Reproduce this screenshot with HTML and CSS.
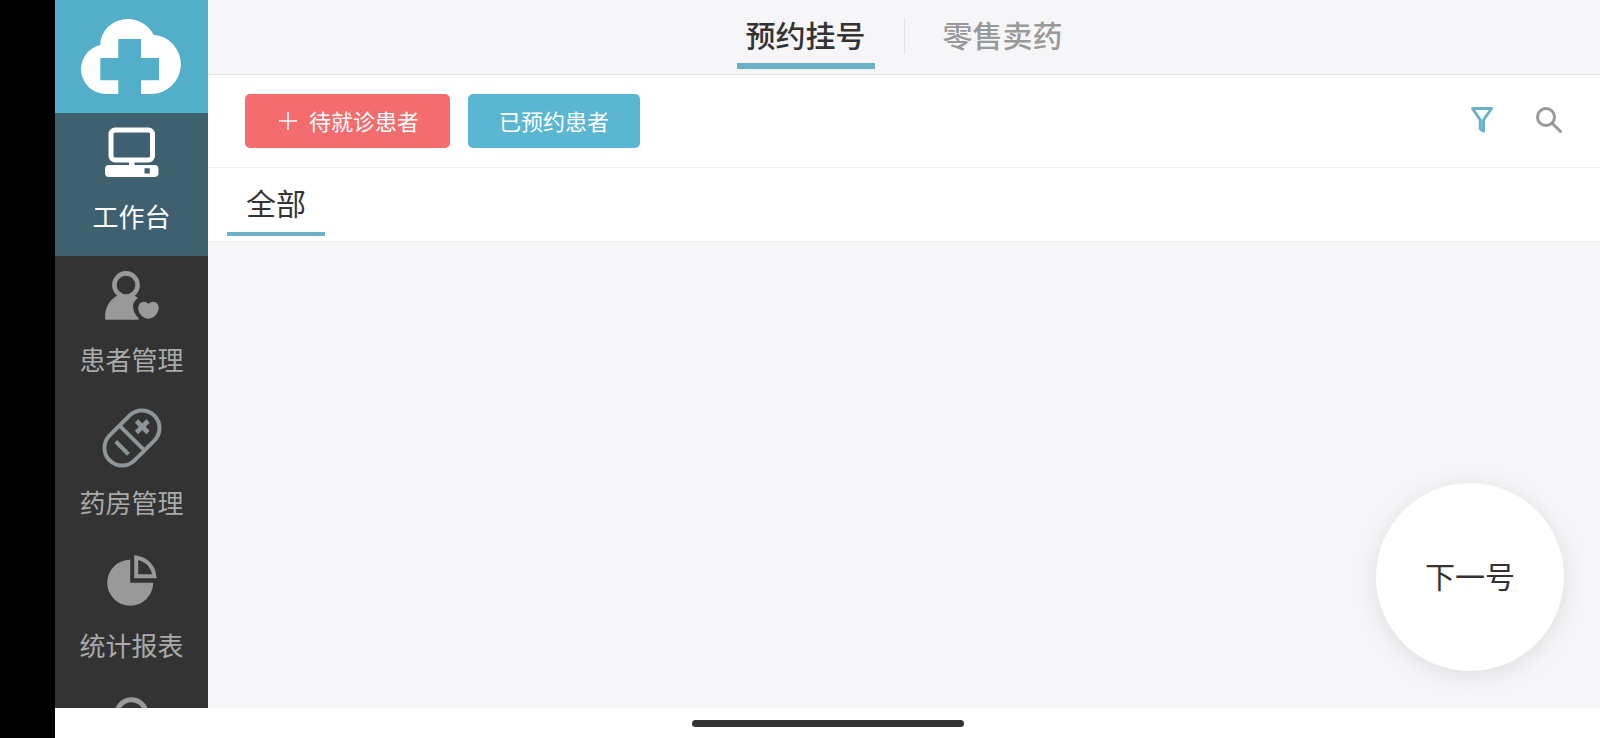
FILE: index.html
```html
<!DOCTYPE html>
<html lang="zh-CN">
<head>
    <meta charset="UTF-8">
    <meta name="viewport" content="width=device-width, initial-scale=1.0">
    <title>工作台</title>
    <link rel="stylesheet" href="styles.css">
</head>
<body>
    <div class="screen">
        <div class="app">
            <aside class="sidebar">
                <div class="logo">
                    <svg width="100" height="75" viewBox="0 0 100 75">
                        <path fill="#fff" d="M25 75A25 25 0 0 1 0 50A25 25 0 0 1 19.300 26A27.400 26 0 0 1 46.700 0A29.200 29.200 0 0 1 72.600 15.700A29.700 29.700 0 0 1 70 75H60V61.300H78V39H60V20H37.300V39H19.300V61.300H37.300V75Z"/>
                    </svg>
                </div>
                <nav class="nav">
                    <a href="#" class="nav-item active">
                        <svg class="nav-icon" viewBox="0 0 60 60">
                            <rect x="9" y="8" width="41.500" height="30" rx="4" fill="none" stroke="currentColor" stroke-width="5"/>
                            <path fill="currentColor" d="M27 40h5.500v4H27z"/>
                            <path fill="currentColor" fill-rule="evenodd" d="M7 43h45.500q4 0 4 4v4q0 4-4 4H7q-4 0-4-4V47q0-4 4-4zM42.500 46.300v5.300h5.300v-5.300z"/>
                        </svg>
                        <span class="nav-label">工作台</span>
                    </a>
                    <a href="#" class="nav-item">
                        <svg class="nav-icon" viewBox="0 0 60 60">
                            <circle cx="24" cy="20" r="11.600" fill="none" stroke="currentColor" stroke-width="4.600"/>
                            <path fill="currentColor" d="M3.200 54.700V49C4 41 8.500 34 16 30.200Q24 34.500 32 30.200L36 33Q31 36.500 31 41.500Q31.500 48.500 36.500 53V54.700Z"/>
                            <path fill="currentColor" d="M46.500 39C48.500 36.500 51 36.200 53.500 37.200C57 39 57.300 43.500 56 46.500C54.500 50 51 53.700 46.500 53.700C41.500 53.500 38 50 36.800 46.500C35.800 43.500 36 39 39.500 37.200C42 36.200 44.500 36.500 46.500 39Z"/>
                        </svg>
                        <span class="nav-label">患者管理</span>
                    </a>
                    <a href="#" class="nav-item">
                        <svg class="nav-icon" viewBox="0 0 60 60" fill="none" stroke="#8f9699" stroke-width="4">
                            <g transform="rotate(-45 30 30)">
                                <rect x="-1.600" y="12.400" width="63.200" height="35.200" rx="17.600"/>
                                <path d="M30 12.400v35.200M16 21v18"/>
                            </g>
                            <path stroke-width="4.600" d="M34.500 13l11.500 11.500M46 13L34.500 24.500"/>
                        </svg>
                        <span class="nav-label">药房管理</span>
                    </a>
                    <a href="#" class="nav-item">
                        <svg class="nav-icon" viewBox="0 0 60 60">
                            <path fill="currentColor" d="M28.200 31.700V8.700A23 23 0 1 0 51.200 31.700Z"/>
                            <path fill="none" stroke="currentColor" stroke-width="4" d="M34.200 6.500V25.300H52.400C51.500 15 44 8 34.200 6.500Z"/>
                        </svg>
                        <span class="nav-label">统计报表</span>
                    </a>
                    <a href="#" class="nav-item">
                        <svg class="nav-icon" viewBox="0 0 60 60">
                            <circle cx="29.500" cy="20.500" r="14.700" fill="none" stroke="currentColor" stroke-width="5"/>
                        </svg>
                    </a>
                </nav>
            </aside>

            <main class="main">
                <header class="header">
                    <a href="#" class="header-tab active">预约挂号</a>
                    <span class="divider"></span>
                    <a href="#" class="header-tab">零售卖药</a>
                </header>

                <div class="toolbar">
                    <button type="button" class="btn btn-red">
                        <svg width="24" height="24" viewBox="0 0 24 24"><path d="M3 13h18M12 4v18" fill="none" stroke="#fff" stroke-width="1.600"/></svg>
                        待就诊患者
                    </button>
                    <button type="button" class="btn btn-blue">已预约患者</button>
                    <div class="tools">
                        <button type="button" class="icon-btn" aria-label="筛选">
                            <svg width="30" height="30" viewBox="0 0 30 30" fill="none" stroke="#6bb2c9" stroke-width="3" stroke-linejoin="round">
                                <path d="M5.500 2.500H24.500L16.500 14V25L13.300 23V14Z"/>
                            </svg>
                        </button>
                        <button type="button" class="icon-btn" aria-label="搜索">
                            <svg width="30" height="30" viewBox="0 0 30 30" fill="none" stroke="#999" stroke-width="3">
                                <circle cx="12" cy="11" r="8.500"/>
                                <path d="M18 17l8.500 8.500" stroke-linecap="round"/>
                            </svg>
                        </button>
                    </div>
                </div>

                <div class="filter-tabs">
                    <a href="#" class="filter-tab active">全部</a>
                </div>

                <div class="content"></div>
                <button type="button" class="next-btn">下一号</button>
            </main>
        </div>

        <div class="home-bar">
            <span class="home-indicator"></span>
        </div>
    </div>
</body>
</html>
```

FILE: styles.css
```css
* {
    box-sizing: border-box;
}
body {
    margin: 0;
    font-family: "Noto Sans CJK SC", sans-serif;
    color: #333;
    background-color: #000;
}
a {
    color: inherit;
    text-decoration: none;
}
button {
    font-family: inherit;
    border: none;
    padding: 0;
    cursor: pointer;
}
svg {
    display: block;
}
.screen {
    display: flex;
    flex-direction: column;
    height: 100vh;
    margin-left: 55px;
    background-color: #fff;
}
.app {
    display: flex;
    flex: 1;
    min-height: 0;
}

/* sidebar */
.sidebar {
    display: flex;
    flex-direction: column;
    flex-shrink: 0;
    width: 153px;
    background-color: #333;
    overflow: hidden;
}
.logo {
    display: flex;
    flex-shrink: 0;
    align-items: center;
    height: 113px;
    padding-left: 26px;
    background-color: #52aec9;
}
.nav-item {
    display: flex;
    flex-direction: column;
    align-items: center;
    gap: 16px;
    height: 143px;
    padding-top: 9px;
    color: #999;
}
.nav-item.active {
    color: #fff;
    background-color: #3e6070;
}
.nav-icon {
    width: 60px;
    height: 60px;
}
.nav-label {
    font-size: 26px;
    line-height: 36px;
    color: #aaa;
}
.nav-item.active .nav-label {
    color: #fff;
}

/* main area */
.main {
    position: relative;
    display: flex;
    flex: 1;
    flex-direction: column;
    min-width: 0;
    background-color: #f6f6f9;
}
.header {
    display: flex;
    justify-content: center;
    gap: 29px;
    height: 75px;
    border-bottom: 1px solid #e2e2e4;
}
.header-tab {
    height: 69px;
    padding: 0 9px;
    border-bottom: 6px solid transparent;
    font-size: 30px;
    font-weight: 500;
    line-height: 68px;
    color: #999;
}
.header-tab.active {
    color: #333;
    border-bottom-color: #6bb2c9;
}
.divider {
    width: 1px;
    height: 36px;
    margin-top: 18px;
    background-color: #e2e2e4;
}
.toolbar {
    display: flex;
    align-items: center;
    gap: 18px;
    padding: 19px 36px 19px 37px;
    background-color: #fff;
    border-bottom: 1px solid #f0f0f2;
}
.btn {
    display: flex;
    align-items: center;
    gap: 9px;
    height: 54px;
    padding: 0 31px 2px;
    border-radius: 5px;
    font-size: 22px;
    color: #fff;
}
.btn-red {
    background-color: #f56c6e;
}
.btn-blue {
    background-color: #5ab6d2;
}
.tools {
    display: flex;
    gap: 37px;
    margin-left: auto;
}
.icon-btn {
    background: none;
}
.filter-tabs {
    display: flex;
    height: 74px;
    padding: 0 19px;
    background-color: #fff;
    border-bottom: 1px solid #f0f0f2;
}
.filter-tab {
    height: 68px;
    padding: 0 19px;
    font-size: 30px;
    line-height: 68px;
}
.filter-tab.active {
    border-bottom: 4px solid #6bb2c9;
}
.content {
    flex: 1;
}
.next-btn {
    position: absolute;
    right: 36px;
    bottom: 37px;
    width: 188px;
    height: 188px;
    padding-bottom: 4px;
    border-radius: 50%;
    background-color: #fff;
    box-shadow: 0 4px 24px rgba(0, 0, 0, 0.1);
    font-size: 30px;
    color: #333;
}

/* system gesture bar */
.home-bar {
    display: flex;
    align-items: center;
    justify-content: center;
    flex-shrink: 0;
    height: 30px;
    background-color: #fff;
}
.home-indicator {
    width: 272px;
    height: 7px;
    border-radius: 4px;
    background-color: #333;
}
```
